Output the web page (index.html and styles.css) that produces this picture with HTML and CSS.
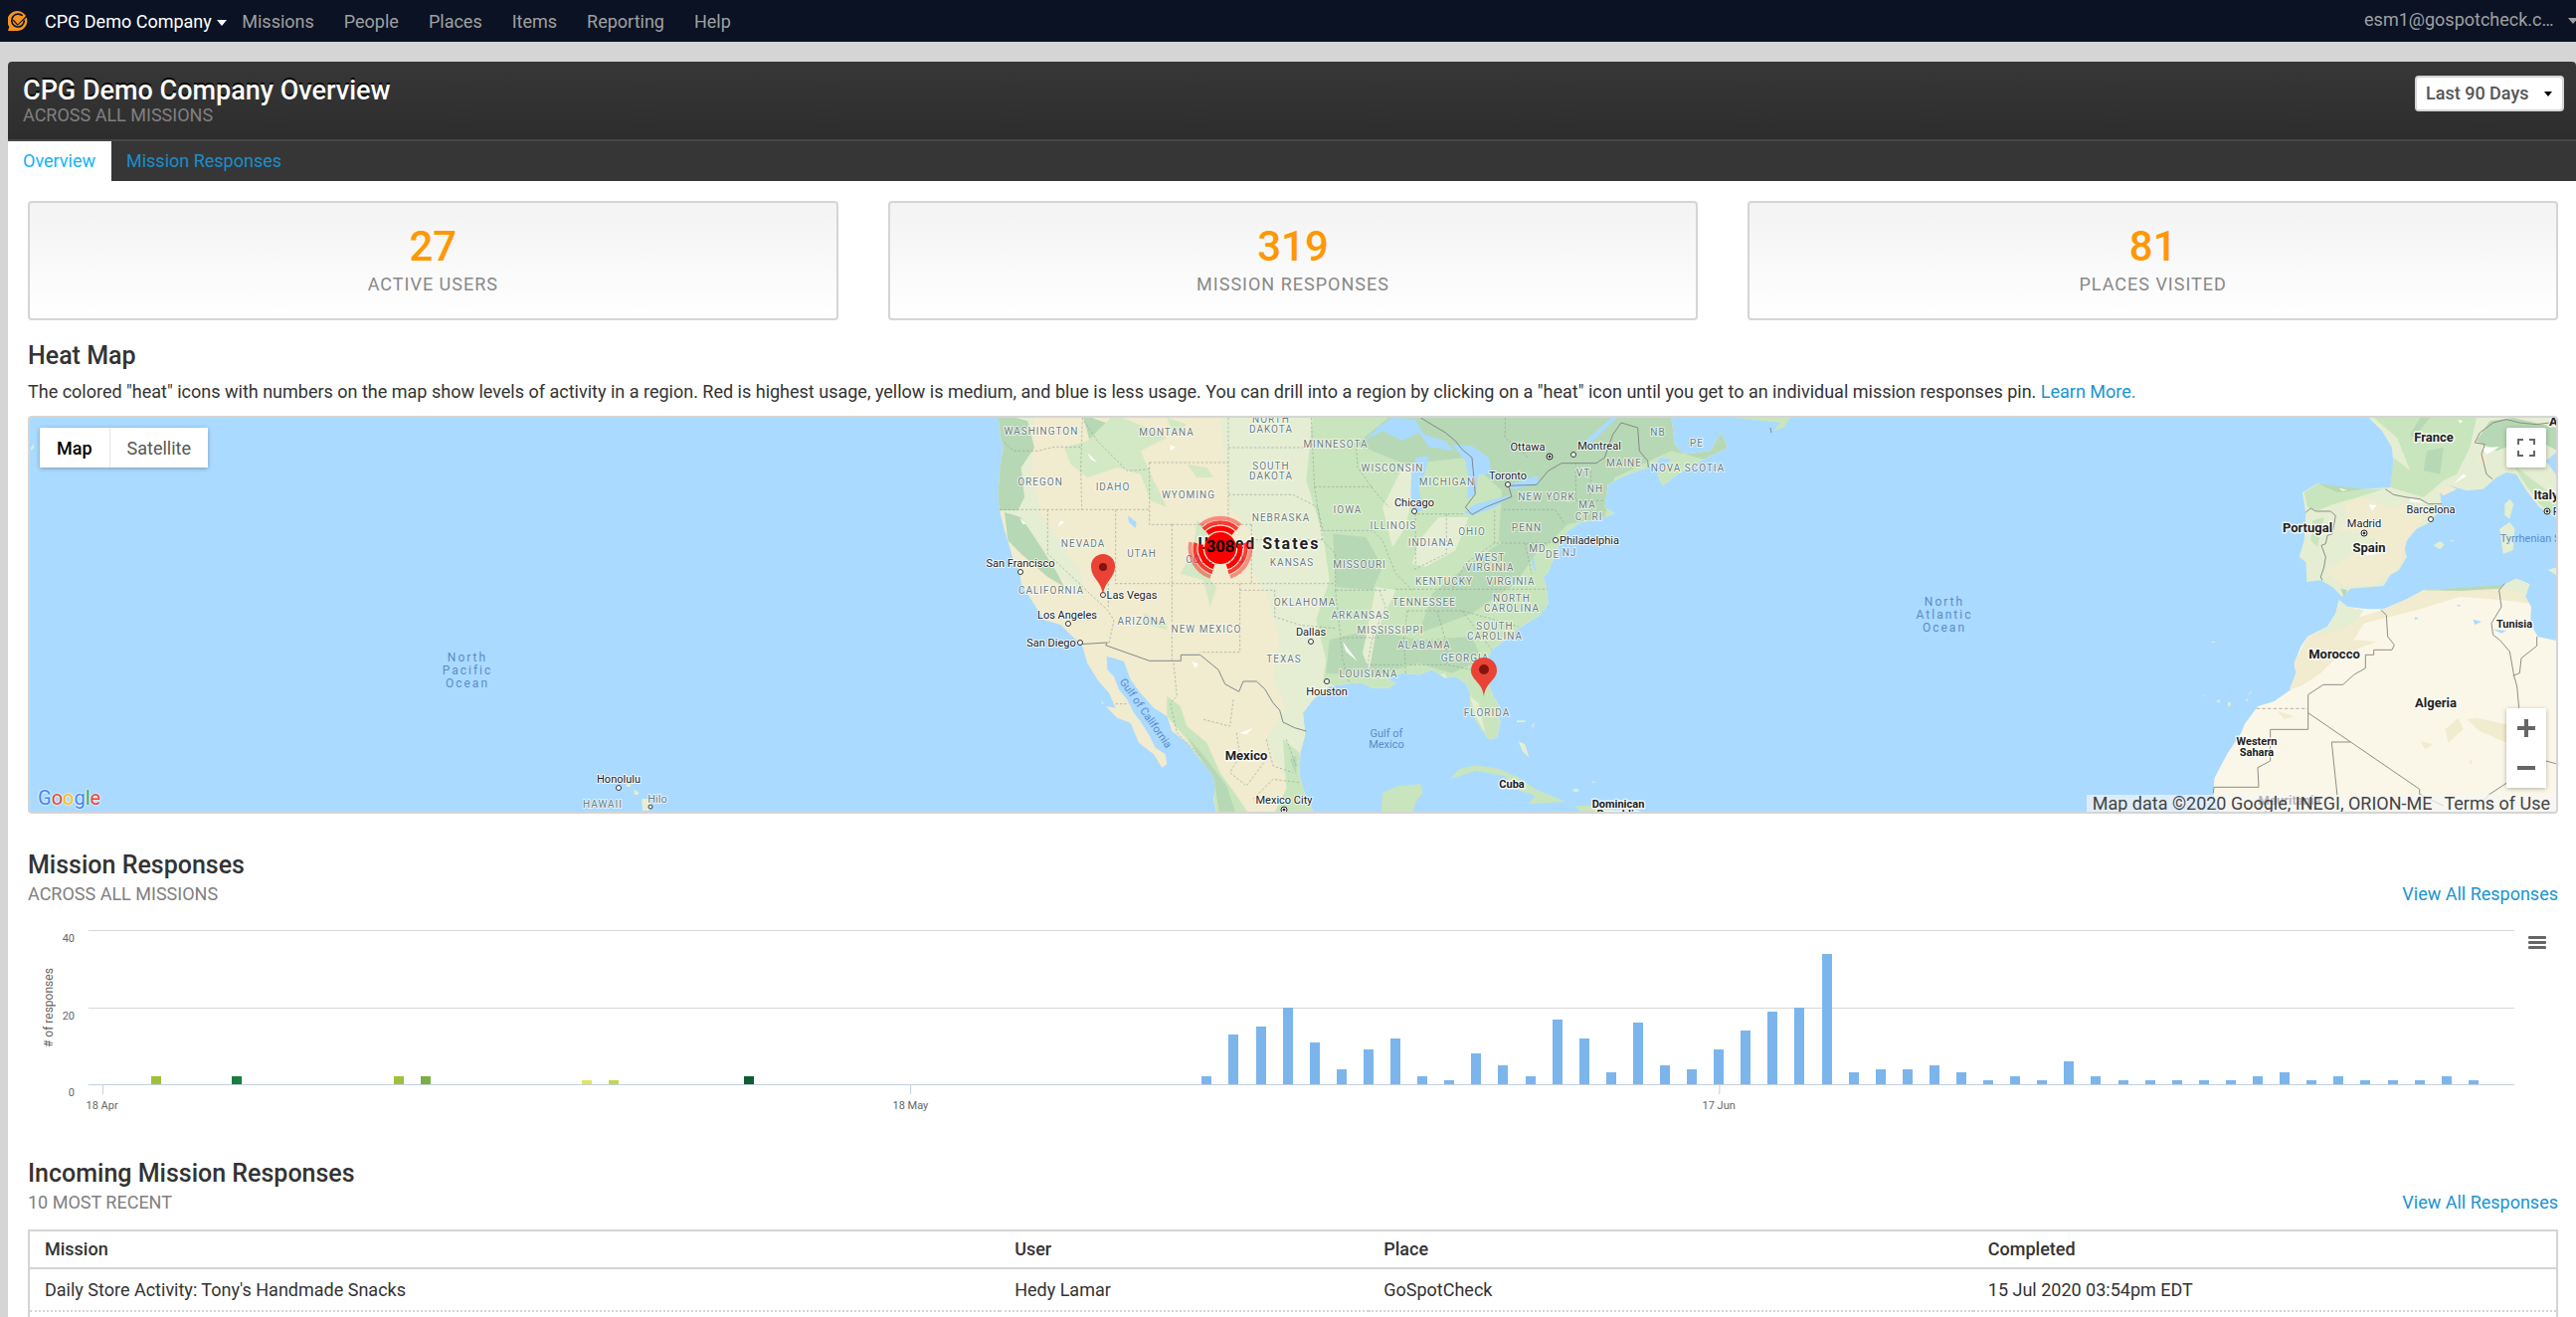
FILE: index.html
```html
<!DOCTYPE html>
<html lang="en">
<head>
  <meta charset="UTF-8">
  <meta name="viewport" content="width=device-width, initial-scale=1.0">
  <title>CPG Demo Company Overview</title>
  <link rel="stylesheet" href="styles.css">
</head>
<body>
  <nav class="navbar">
    <a href="#" class="logo" aria-label="Home">
      <svg width="20" height="20" viewBox="0 0 60 60">
        <path fill="#f7941e" d="M0 60L4 48A30 30 0 1 1 30 60Z"/>
        <path fill="none" stroke="#0a1224" stroke-width="5" d="M45 15C34 5 18 9 13 21C8 34 15 46 28 48C40 49 49 41 49 28"/>
        <path fill="none" stroke="#0a1224" stroke-width="5" d="M16 27L29 41L60 12"/>
        <path fill="none" stroke="#f7941e" stroke-width="8" d="M20 23L30 34L50 14"/>
      </svg>
    </a>
    <a href="#" class="company">CPG Demo Company <span class="caret"></span></a>
    <ul class="menu">
      <li><a href="#">Missions</a></li>
      <li><a href="#">People</a></li>
      <li><a href="#">Places</a></li>
      <li><a href="#">Items</a></li>
      <li><a href="#">Reporting</a></li>
      <li><a href="#">Help</a></li>
    </ul>
    <a href="#" class="account">esm1@gospotcheck.c… <span class="caret"></span></a>
  </nav>

  <main class="panel">
    <header class="panel-header">
      <div>
        <h1>CPG Demo Company Overview</h1>
        <p class="subtitle">ACROSS ALL MISSIONS</p>
      </div>
      <div class="range">
        <select aria-label="Date range">
          <option>Last 90 Days</option>
        </select>
      </div>
    </header>
    <div class="tabs">
      <a href="#" class="tab active">Overview</a>
      <a href="#" class="tab">Mission Responses</a>
    </div>

    <div class="content">
      <div class="stats">
        <div class="stat"><strong>27</strong><span>ACTIVE USERS</span></div>
        <div class="stat"><strong>319</strong><span>MISSION RESPONSES</span></div>
        <div class="stat"><strong>81</strong><span>PLACES VISITED</span></div>
      </div>

      <section class="heat">
        <h2>Heat Map</h2>
        <p class="intro">The colored "heat" icons with numbers on the map show levels of activity in a region. Red is highest usage, yellow is medium, and blue is less usage. You can drill into a region by clicking on a "heat" icon until you get to an individual mission responses pin. <a href="#">Learn More.</a></p>
        <div class="map">
          <svg class="map-canvas" viewBox="30 420 2540 396" preserveAspectRatio="xMidYMid slice">
            <defs>
              <clipPath id="america">
                <path d="M130 20L140 100L148 110L135 190L130 265L135 310L150 370L165 420L180 470L195 490L200 530L225 570L250 610L270 640L320 655L355 690L385 720L400 770L430 820L465 860L485 905L455 900L490 935L530 950L555 1010L600 1045L625 1085L640 1075L635 1045L605 1025L585 985L560 945L540 920L520 880L495 850L480 810L460 790L458 750L480 755L510 765L530 820L560 860L600 905L640 930L655 975L700 1010L740 1060L780 1110L785 1150L780 1180L790 1230H1090L1060 1180L1040 1110L1042 1040L1057 985L1050 920L1085 875L1130 840L1200 830L1225 828L1260 845L1310 845L1330 830L1300 815L1350 800L1400 805L1440 790L1480 815L1510 810L1540 830L1555 860L1555 900L1570 940L1610 1000L1635 995L1645 950L1642 900L1620 860L1605 820L1600 770L1620 730L1660 700L1700 665L1765 625L1790 590L1785 545L1775 510L1790 495L1812 440L1820 420L1850 370L1890 345L1945 335L1990 318L1960 300L1965 265L1970 230L2020 205L2060 190L2095 180L2130 150L2165 152L2120 200L2135 235L2180 200L2250 160L2330 120L2312 75L2280 130L2200 140L2170 110L2165 60L2160 20Z"/>
              </clipPath>
            </defs>

            <!-- North America -->
            <g transform="translate(960 410) scale(.33333)">
              <g clip-path="url(#america)">
                <rect x="90" y="0" width="2300" height="1260" fill="#f1ebcf"/>
                <path fill="#e5eed2" d="M800 20H2400V1240H1090L980 1090L940 1000L1000 900L960 820L980 700L940 560L890 480L900 380L830 300Z"/>
                <path fill="#c9e5bd" d="M1080 20H2400V1000H1500L1480 800L1280 860L1110 830L1120 760L1090 640L1130 520L1110 380L1060 220Z"/>
                <path fill="#b7d8b4" d="M1320 20H2400V190L2160 130L1990 210L1960 330L1850 350L1780 420L1700 450L1640 400L1650 250L1540 150L1360 170L1210 110ZM1140 380L1240 390L1290 480L1260 550L1150 540ZM1640 410L1760 430L1690 530L1560 620L1400 680L1440 560L1540 480ZM1130 700L1250 670L1400 700L1560 690L1590 760L1500 800L1400 770L1250 810L1120 800Z"/>
                <path fill="#e5eed2" d="M1350 180L1400 170L1360 360L1320 420L1290 300ZM1460 330L1550 330L1510 430L1420 480L1380 470L1400 400ZM1270 540L1330 550L1270 680L1250 790L1230 740Z"/>
                <path fill="#e5eed2" d="M130 20H240L230 200L260 320L380 500L390 580L330 520L260 480L190 430L150 340Z"/>
                <path fill="#b7d8b4" d="M130 20H150L220 40L240 120L200 180L210 270L190 310L120 310ZM385 20L470 50L490 90L530 130L520 180L470 150L410 110ZM150 315L200 330L260 420L310 500L330 540L280 510L200 440L160 400Z"/>
                <path fill="#d3e8c4" d="M480 20L580 60L640 90L560 130L600 220L640 300L590 280L560 200L490 180L400 210L350 170L330 120L400 100ZM700 170L760 180L780 210L730 210ZM730 340L790 380L770 520L790 540L770 600L750 520L680 500L720 430ZM570 620L640 650L640 670L570 650ZM640 30L700 50L660 80Z"/>
                <path fill="#c9e5bd" d="M640 870L680 900L700 960L760 1010L800 1100L850 1170L890 1230H790L770 1110L700 1000L640 930ZM990 1000L1040 1040L1050 1130L1090 1230H960L1000 1150Z"/>
                <path fill="#b7d8b4" d="M700 990L760 1060L820 1140L850 1230H800L780 1120ZM1010 1060L1030 1050L1030 1110Z"/>
                <path fill="#fff" d="M320 340L330 345L310 360ZM715 765L735 772L725 785ZM195 330L215 350L205 350ZM650 110L665 120L650 130ZM400 135L430 165L410 155ZM860 980L900 965L880 985ZM1170 705L1215 765L1180 735Z"/>
              </g>

              <!-- lakes and rivers -->
              <g fill="#aadaff">
                <path d="M1235 100L1280 55L1320 30L1390 35L1415 80L1480 100L1505 130L1430 118L1400 75L1350 100L1290 70ZM1392 150L1430 145L1420 190L1400 240L1410 310L1383 316L1375 260L1378 190ZM1500 110L1560 115L1610 150L1620 200L1580 200L1570 260L1545 275L1550 220L1540 160ZM1535 315L1570 290L1680 262L1630 300L1560 325ZM1660 236L1755 205L1765 228L1690 246ZM1985 25L2000 28L1930 95L1880 125L1890 110ZM522 325L548 345L545 362L525 345ZM1745 445L1755 500L1740 470Z"/>
              </g>

              <!-- islands and the Yucatan -->
              <path fill="#c9e5bd" d="M1495 1120L1520 1090L1570 1078L1640 1088L1700 1115L1750 1150L1800 1170L1842 1188L1730 1195L1750 1170L1690 1150L1660 1110L1570 1095ZM1290 1160L1340 1140L1405 1135L1412 1160L1390 1190L1380 1230H1285ZM1870 1200L1960 1200L2000 1230H1900ZM2350 30L2520 30L2500 60L2470 70L2490 45Z"/>
              <path fill="#e5eed2" d="M1700 1005L1720 1015L1732 1055L1712 1035ZM1695 943H1720V948H1695ZM1742 955L1748 950L1742 972ZM1865 1150H1882V1157H1865ZM1922 1124L1935 1130H1925ZM1555 870L1580 890L1600 980L1570 930ZM440 885L450 890L445 893Z"/>

              <!-- state lines -->
              <path fill="none" stroke="#8d9c97" stroke-opacity=".6" stroke-width="3" stroke-dasharray="7 6" d="M148 105L180 130L250 130L300 118L380 118M385 30L380 180L383 307M135 307H587M280 307V440L460 610L480 640L465 710M485 307V530M463 530V600M390 40L430 100L520 190L587 185M587 165H825M587 165V352H655M825 30V352M825 120H1075M825 262H1020L1095 300L1110 370M655 352H895M655 352V760M895 352V530M895 398H1110M485 530H895L1148 530M860 530V737H740M860 550H965V630L1040 655L1150 665M1075 30L1085 238L1110 400L1148 440V550M1085 238H1260M1150 550H1300M1110 370H1260L1290 400L1330 500L1380 550M1148 550L1160 660L1170 760L1190 830M1170 693H1280M1280 550L1300 600L1260 690L1245 775H1350M1383 320H1535M1390 320V470M1483 320V440L1380 490M1628 310V408H1780L1830 400M1655 307H1810L1840 350M1628 408L1540 470L1500 550M1330 547H1788M1365 612H1530L1630 640L1700 660M1365 612L1355 690L1360 800M1455 612L1480 700L1485 775M1372 775H1485L1560 790M1530 612L1620 730M1873 165V280M1920 190L1915 270M1870 280H1960M1720 408L1740 500M1210 110L1215 180L1265 250L1310 300M1660 30V90L1730 150M1000 1000L1030 1080M660 770L670 870L650 890L670 980L740 1050M750 940L830 960L840 880M850 980L860 1050L830 1100L880 1140L940 1060M940 1000L960 1080L1020 1100M900 1180L960 1120L1040 1130M485 893H525"/>
              <!-- borders -->
              <path fill="none" stroke="#7f8a8a" stroke-width="3" d="M378 713L460 708L455 716L587 763H682V745H740L795 790L815 833L857 856L870 825H910L935 848L960 890L980 912L990 948L1025 965L1060 975M1405 30L1480 75L1510 100L1530 125L1560 150L1570 260L1540 300L1560 322L1600 300L1680 268L1670 235L1755 232L1790 190L1830 167H1935L1960 150L1985 80L2010 45L2060 60L2065 130L2090 160L2092 180M2460 60L2463 75"/>
            </g>

            <!-- Hawaii -->
            <path fill="#e5eed2" d="M630 788H634V791H630ZM637 794L642 796V799H638ZM645 803L652 803L656 809L652 815H646ZM31 450L34 446V450L31 453Z"/>

            <!-- Europe and Africa -->
            <g transform="translate(2190 410) scale(.33333)">
              <path fill="#e5eed2" d="M565 20L615 70L645 120L650 180L640 240L560 245L490 240L420 228L375 255L385 320L380 400L365 450L385 465L388 525L430 520L465 540L495 570L520 545L620 537L640 505L665 490L690 450L680 415L710 370L760 345L795 300L790 255L820 235L870 250L920 245L960 210L990 195L1020 200L1050 250L1090 300L1145 335V210L1110 160L1145 130V20Z"/>
              <path fill="#c9e5bd" d="M590 30H900L880 120L840 200L800 220L740 270L640 240L650 150L700 190L660 90ZM380 255L420 230L560 245L620 245L540 270L470 290L420 310L390 300ZM1010 170L1060 210L1140 270V330L1090 290L1040 220ZM440 330L420 420L400 400L405 340Z"/>
              <path fill="#b7d8b4" d="M900 100L940 40L1010 30L1145 60V130L1070 90L960 130ZM420 228L560 245L480 255ZM750 130L800 120L790 200L740 190ZM700 80L730 30L760 30L710 90Z"/>
              <path fill="#f1ebcf" d="M500 290L560 270L640 300L700 290L740 340L690 400L670 480L600 530L500 540L440 490L530 440L640 430L570 380L480 370L510 320ZM780 245L820 235L840 245L800 265ZM900 150L935 130L925 180Z"/>
              <path fill="#fff" d="M575 292L598 294L585 310ZM860 200L870 205L830 230ZM700 270L745 288L700 283ZM485 242L510 248L495 250ZM545 420L600 440L570 445ZM845 35L858 40L850 47ZM915 120L970 118L930 140Z"/>
              <path fill="#fbf7e8" d="M485 580L510 600L570 607L620 607L690 577L740 550L850 545L980 535L1020 515L1060 532L1047 570L1065 600L1062 650L1085 690L1145 703V1230H130L105 1160L110 1115L150 1040L190 980L200 955L240 900L290 885L340 850L355 800L350 770L370 720L390 690L450 660L475 620Z"/>
              <path fill="#f1ebcf" d="M390 690L450 660L520 640L600 615L690 577L740 550L980 537L1020 515L1060 532L1047 570L1060 590L980 580L850 570L720 610L620 635L560 650L530 700L600 705L480 750L430 800L370 840L335 850L355 800L350 770ZM805 970L845 935L860 970L815 1010ZM870 940L900 935L990 955V1010L910 975ZM730 1005L770 1015L745 1030ZM880 1060L890 1070L880 1075ZM300 915L350 930L320 940Z"/>
              <path fill="#e5eed2" d="M485 580L510 600L560 610L540 640L500 665L430 685L400 690L450 660L475 620ZM980 535L1020 515L1060 532L1047 560L990 550ZM985 290L1000 275L1012 290L1000 335L985 325ZM970 365L1000 345L1015 365L1010 430L980 440ZM770 415L790 402L803 412L790 427ZM820 400L832 398L828 404ZM1115 488L1145 480V508ZM115 885L125 878L125 890ZM150 888H158V900H150ZM203 885L225 850L215 860L208 885ZM75 868L80 865V870ZM100 705H112V708H100Z"/>
              <path fill="#b7d8b4" d="M740 550L860 542L980 533L970 545L850 552ZM490 545L510 550L500 570Z"/>
              <path fill="#aadaff" d="M890 638L915 645L895 655ZM950 668L990 672L975 680ZM715 630L725 635L713 640ZM840 595L855 595L845 600Z"/>
              <path fill="none" stroke="#8d8d88" stroke-width="3" d="M385 315L400 303L415 312H460L475 325L465 380L450 385L445 410L432 415L445 450L440 480L430 510L435 520M625 245L650 262L690 270L730 275L755 290L795 290M895 105L910 75L950 45L990 35L1030 45L1080 50L1145 42M895 105L925 110L915 140L930 200L948 215M612 610L628 625L632 690L652 715L645 730H590V745H565V785L530 805L497 835H438L392 865V970H278V1065L240 1085L243 1144H108L106 1162M392 920L728 1150V1165L800 1200M463 1008H520M463 1008L480 1170M985 530L968 550L975 600L945 650L950 685L970 700L1000 735L1013 808L1022 840L1028 905M1082 690V718L1035 755L1030 800L1010 808M1110 1065L1145 1075M990 1132L940 1165L920 1185"/>
              <path fill="none" stroke="#8d8d88" stroke-width="2" stroke-dasharray="10 7" d="M236 907H392"/>
            </g>

            <!-- city dots -->
            <g fill="#fff" stroke="#333" stroke-width="1">
              <circle cx="1026" cy="575" r="2.5"/><circle cx="1109" cy="598" r="2.5"/><circle cx="1074" cy="627" r="2.5"/><circle cx="1086" cy="646" r="2.5"/>
              <circle cx="1318" cy="645" r="2.5"/><circle cx="1334" cy="685" r="2.5"/><circle cx="1422" cy="514" r="2.5"/><circle cx="1516" cy="487" r="2.5"/>
              <circle cx="1582" cy="457" r="2.5"/><circle cx="1564" cy="543" r="2.5"/><circle cx="2444" cy="522" r="2.5"/><circle cx="622" cy="792" r="2.5"/><circle cx="654" cy="811" r="2"/>
            </g>
            <g fill="#222" stroke="#222" stroke-width="1">
              <circle cx="1558" cy="459" r="3" fill="#fff"/><circle cx="1558" cy="459" r="1"/>
              <circle cx="2377" cy="536" r="3" fill="#fff"/><circle cx="2377" cy="536" r="1"/>
              <circle cx="2561" cy="514" r="3" fill="#fff"/><circle cx="2561" cy="514" r="1"/>
              <circle cx="1291" cy="814" r="3" fill="#fff"/><circle cx="1291" cy="814" r="1"/>
            </g>

            <g class="state">
              <text x="1047" y="437">WASHINGTON</text><text x="1173" y="438">MONTANA</text>
              <text x="1278" y="425">NORTH</text><text x="1278" y="435">DAKOTA</text>
              <text x="1278" y="472">SOUTH</text><text x="1278" y="482">DAKOTA</text>
              <text x="1343" y="450">MINNESOTA</text><text x="1046" y="488">OREGON</text><text x="1119" y="493">IDAHO</text>
              <text x="1195" y="501">WYOMING</text><text x="1288" y="524">NEBRASKA</text><text x="1355" y="516">IOWA</text>
              <text x="1089" y="550">NEVADA</text><text x="1148" y="560">UTAH</text><text x="1222" y="566">COLORADO</text>
              <text x="1299" y="569">KANSAS</text><text x="1367" y="571">MISSOURI</text><text x="1057" y="597">CALIFORNIA</text>
              <text x="1148" y="628">ARIZONA</text><text x="1213" y="636">NEW MEXICO</text><text x="1312" y="609">OKLAHOMA</text>
              <text x="1368" y="622">ARKANSAS</text><text x="1291" y="666">TEXAS</text><text x="1376" y="681">LOUISIANA</text>
              <text x="1400" y="474">WISCONSIN</text><text x="1455" y="488">MICHIGAN</text><text x="1401" y="532">ILLINOIS</text>
              <text x="1439" y="549">INDIANA</text><text x="1480" y="538">OHIO</text><text x="1535" y="534">PENN</text>
              <text x="1498" y="564">WEST</text><text x="1498" y="574">VIRGINIA</text><text x="1452" y="588">KENTUCKY</text>
              <text x="1519" y="588">VIRGINIA</text><text x="1432" y="609">TENNESSEE</text><text x="1520" y="605">NORTH</text>
              <text x="1520" y="615">CAROLINA</text><text x="1503" y="633">SOUTH</text><text x="1503" y="643">CAROLINA</text>
              <text x="1398" y="637">MISSISSIPPI</text><text x="1432" y="652">ALABAMA</text><text x="1473" y="665">GEORGIA</text>
              <text x="1495" y="720">FLORIDA</text><text x="1555" y="503">NEW YORK</text><text x="1592" y="479">VT</text>
              <text x="1604" y="495">NH</text><text x="1596" y="511">MA</text><text x="1591" y="523">CT</text><text x="1606" y="523">RI</text>
              <text x="1546" y="555">MD</text><text x="1561" y="561">DE</text><text x="1578" y="559">NJ</text>
              <text x="1633" y="469">MAINE</text><text x="1667" y="438">NB</text><text x="1706" y="449">PE</text>
              <text x="1697" y="474">NOVA SCOTIA</text><text x="606" y="812">HAWAII</text><text x="661" y="807" class="hilo">Hilo</text>
            </g>
            <g class="city">
              <text x="1026" y="570">San Francisco</text><text x="1138" y="602">Las Vegas</text><text x="1073" y="622">Los Angeles</text>
              <text x="1057" y="650">San Diego</text><text x="1318" y="639">Dallas</text><text x="1334" y="699">Houston</text>
              <text x="1422" y="509">Chicago</text><text x="1536" y="453">Ottawa</text><text x="1608" y="452">Montreal</text>
              <text x="1516" y="482">Toronto</text><text x="1598" y="547">Philadelphia</text><text x="1291" y="808">Mexico City</text>
              <text x="2377" y="530">Madrid</text><text x="2444" y="516">Barcelona</text><text x="622" y="787">Honolulu</text>
              <text x="2581" y="518">Rome</text>
            </g>
            <g class="country small">
              <text x="1520" y="792">Cuba</text><text x="1627" y="812">Dominican</text><text x="1627" y="822">Republic</text>
              <text x="2528" y="631">Tunisia</text><text x="2269" y="749">Western</text><text x="2269" y="760">Sahara</text>
            </g>
            <g class="country">
              <text x="1253" y="764">Mexico</text><text x="2447" y="444">France</text><text x="2320" y="535">Portugal</text>
              <text x="2382" y="555">Spain</text><text x="2347" y="662">Morocco</text><text x="2449" y="711">Algeria</text>
              <text x="2560" y="502">Italy</text><text x="2584" y="428">Austria</text><text x="2302" y="809">Mauritania</text>
            </g>
            <text class="nation" x="1266" y="552">United States</text>
            <g class="sea">
              <text x="470" y="665">North</text><text x="470" y="678">Pacific</text><text x="470" y="691">Ocean</text>
              <text x="1955" y="609">North</text><text x="1955" y="622">Atlantic</text><text x="1955" y="635">Ocean</text>
            </g>
            <g class="gulf">
              <text x="1394" y="741">Gulf of</text><text x="1394" y="752">Mexico</text><text x="2550" y="545">Tyrrhenian Sea</text>
              <text transform="translate(1149 719) rotate(55)">Gulf of California</text>
            </g>

            <!-- activity cluster -->
            <g transform="translate(1227 551)" fill="none" stroke="#f00">
              <circle r="16" fill="#f00" stroke="none"/>
              <g stroke-width="5">
                <path id="arc1" d="M-13 -15A20 20 0 0 1 13 -15"/>
                <use href="#arc1" transform="rotate(120)"/><use href="#arc1" transform="rotate(240)"/>
              </g>
              <g stroke-width="4" stroke-opacity=".75">
                <path id="arc2" d="M-17 -19A25 25 0 0 1 17 -19"/>
                <use href="#arc2" transform="rotate(120)"/><use href="#arc2" transform="rotate(240)"/>
              </g>
              <g stroke-width="4" stroke-opacity=".4">
                <path id="arc3" d="M-20 -23A31 31 0 0 1 20 -23"/>
                <use href="#arc3" transform="rotate(120)"/><use href="#arc3" transform="rotate(240)"/>
              </g>
            </g>
            <text class="count" x="1227" y="555">308</text>

            <!-- pins -->
            <g fill="#ea4335">
              <path d="M1109 599C1108 584 1097 582 1097 569A12 12 0 0 1 1121 569C1121 582 1110 584 1109 599Z"/>
              <path d="M1492 701C1491 686 1479 684 1479 674A13 13 0 0 1 1505 674C1505 684 1493 686 1492 701Z"/>
            </g>
            <circle cx="1109" cy="570" r="4" fill="#811411"/>
            <circle cx="1492" cy="673" r="5" fill="#811411"/>
          </svg>

          <div class="map-type">
            <button class="selected">Map</button>
            <button>Satellite</button>
          </div>
          <button class="fullscreen" aria-label="Toggle fullscreen">
            <svg width="18" height="18" viewBox="0 0 18 18"><path fill="#666" d="M0 0v6h2V2h4V0zM16 0h-4v2h4v4h2V0zM16 16h-4v2h6v-6h-2zM2 12H0v6h6v-2H2z"/></svg>
          </button>
          <div class="zoom">
            <button aria-label="Zoom in"><svg width="18" height="18" viewBox="0 0 18 18"><path fill="#666" d="M18 7h-7V0H7v7H0v4h7v7h4v-7h7z"/></svg></button>
            <button aria-label="Zoom out"><svg width="18" height="18" viewBox="0 0 18 18"><path fill="#666" d="M0 7h18v4H0z"/></svg></button>
          </div>
          <div class="google"><span class="b">G</span><span class="r">o</span><span class="y">o</span><span class="b">g</span><span class="g">l</span><span class="r">e</span></div>
          <div class="attribution"><span>Map data ©2020 Google, INEGI, ORION-ME</span><a href="#">Terms of Use</a></div>
        </div>
      </section>

      <section class="responses">
        <h2>Mission Responses</h2>
        <div class="section-sub">
          <p class="subtitle">ACROSS ALL MISSIONS</p>
          <a href="#">View All Responses</a>
        </div>
        <div class="chart">
          <div class="axis-title"># of responses</div>
          <div class="y-axis"><span>40</span><span>20</span><span>0</span></div>
          <div class="plot" id="plot"></div>
          <button class="chart-menu" aria-label="Chart menu"><i></i><i></i><i></i></button>
        </div>
      </section>

      <section class="incoming">
        <h2>Incoming Mission Responses</h2>
        <div class="section-sub">
          <p class="subtitle">10 MOST RECENT</p>
          <a href="#">View All Responses</a>
        </div>
        <table>
          <thead>
            <tr><th class="col-mission">Mission</th><th class="col-user">User</th><th class="col-place">Place</th><th>Completed</th></tr>
          </thead>
          <tbody>
            <tr><td>Daily Store Activity: Tony's Handmade Snacks</td><td>Hedy Lamar</td><td>GoSpotCheck</td><td>15 Jul 2020 03:54pm EDT</td></tr>
            <tr><td></td><td></td><td></td><td></td></tr>
          </tbody>
        </table>
      </section>
    </div>
  </main>

  <script>
    // one value per day, starting on 18 Apr
    const values = [
      0, 0, 2, 0, 0, 2, 0, 0, 0, 0, 0, 2, 2, 0, 0, 0, 0, 0, 1, 1,
      0, 0, 0, 0, 2, 0, 0, 0, 0, 0, 0, 0, 0, 0, 0, 0, 0, 0, 0, 0,
      0, 2, 13, 15, 20, 11, 4, 9, 12, 2, 1, 8, 5, 2, 17, 12, 3, 16, 5, 4,
      9, 14, 19, 20, 34, 3, 4, 4, 5, 3, 1, 2, 1, 6, 2, 1, 1, 1, 1, 1,
      2, 3, 1, 2, 1, 1, 1, 2, 1, 0
    ];
    const colors = { 2: '#a0c03c', 5: '#1b7d3e', 11: '#a0c03c', 12: '#7dae43', 18: '#e2e659', 19: '#c5d941', 24: '#115c33' };
    const ticks = { 0: '18 Apr', 30: '18 May', 60: '17 Jun' };

    const plot = document.getElementById('plot');
    values.forEach(function (value, day) {
      const col = document.createElement('div');
      col.className = 'day';
      if (value) {
        const bar = document.createElement('div');
        bar.className = 'bar';
        bar.style.height = (value / 40 * 100) + '%';
        if (colors[day]) bar.style.backgroundColor = colors[day];
        col.appendChild(bar);
      }
      if (ticks[day]) {
        const tick = document.createElement('span');
        tick.className = 'tick';
        tick.textContent = ticks[day];
        col.appendChild(tick);
      }
      plot.appendChild(col);
    });
  </script>
</body>
</html>
```
FILE: styles.css
```css
* {
  box-sizing: border-box;
}

body {
  margin: 0;
  height: 100vh;
  overflow: hidden;
  background-color: #d5d5d5;
  font-family: Roboto, "Liberation Sans", sans-serif;
  font-size: 18px;
  line-height: 24px;
  color: #333;
}

a {
  color: #1a94d2;
  text-decoration: none;
}

h1, h2, p {
  margin: 0;
}

h1, h2 {
  font-size: 27px;
  line-height: 32px;
  font-weight: 500;
}

h2 {
  font-size: 25px;
}

button {
  border: none;
  padding: 0;
  background-color: #fff;
  font-family: inherit;
  cursor: pointer;
}

/* top bar */
.navbar {
  display: flex;
  align-items: center;
  height: 42px;
  padding-left: 8px;
  background-color: #0a1224;
}

.navbar a {
  color: #a0a0a0;
}

.logo {
  display: flex;
  margin-right: 17px;
}

.navbar .company {
  padding-top: 2px;
  color: #fff;
}

.caret {
  display: inline-block;
  margin-left: 1px;
  border: 5px solid transparent;
  border-top: 6px solid currentColor;
  border-bottom: 0;
  vertical-align: middle;
}

.menu {
  display: flex;
  gap: 30px;
  margin: 0 0 0 15px;
  padding: 2px 0 0;
  list-style: none;
}

.account {
  margin-left: auto;
  margin-right: -2px;
  padding-bottom: 2px;
}

.account .caret {
  margin-left: 10px;
}

/* panel */
.panel {
  margin: 20px 0 0 8px;
  background-color: #fff;
  border-radius: 4px 4px 0 0;
  overflow: hidden;
}

.panel-header {
  display: flex;
  justify-content: space-between;
  height: 80px;
  padding: 13px 12px 0 15px;
  background-image: linear-gradient(#373737, #2d2d2d);
  border-bottom: 2px solid #464646;
}

.panel-header h1 {
  color: #fff;
  text-shadow: 0 -2px 0 #000;
}

.subtitle {
  color: #808080;
}

.panel-header .subtitle {
  line-height: 18px;
}

.range {
  position: relative;
  height: 36px;
  margin-top: 1px;
}

.range select {
  width: 150px;
  height: 36px;
  padding: 0 9px 1px;
  appearance: none;
  border: 2px solid #d5d5d5;
  border-radius: 4px;
  background-color: #fff;
  color: #555;
  font-family: inherit;
  font-size: 18px;
  font-weight: 500;
}

.range::after {
  content: "";
  position: absolute;
  right: 12px;
  top: 16px;
  border: 4px solid transparent;
  border-top: 5px solid #000;
  border-bottom: 0;
}

.tabs {
  display: flex;
  background-color: #363636;
}

.tab {
  padding: 8px 15px;
  color: #1a8fcb;
}

.tab.active {
  padding-right: 16px;
  background-color: #fff;
  color: #0fb4f5;
}

.content {
  padding: 20px 18px 0 20px;
}

/* stat boxes */
.stats {
  display: grid;
  grid-template-columns: repeat(3, 1fr);
  gap: 50px;
}

.stat {
  display: flex;
  flex-direction: column;
  align-items: center;
  height: 120px;
  padding-top: 22px;
  border: 2px solid #d5d5d5;
  border-radius: 4px;
  background-image: linear-gradient(#f3f3f3, #fff);
}

.stat strong {
  font-size: 42px;
  line-height: 44px;
  font-weight: 500;
  color: #ff9800;
}

.stat span {
  margin-top: 4px;
  letter-spacing: 1px;
  color: #888;
}

/* heat map */
.heat {
  padding-top: 20px;
}

.intro {
  margin: 8px 0 12px;
}

.map {
  position: relative;
  height: 400px;
  border: 2px solid #d5d5d5;
  border-radius: 4px;
  background-color: #aadaff;
  overflow: hidden;
}

.map-canvas {
  display: block;
  width: 100%;
  height: 100%;
}

.map-canvas text {
  text-anchor: middle;
  paint-order: stroke;
  stroke-linejoin: round;
}

.state {
  font-size: 10px;
  letter-spacing: 1px;
  fill: #6c7e80;
  stroke: rgba(255, 255, 255, 0.7);
  stroke-width: 2px;
}

.state .hilo {
  font-size: 11px;
  letter-spacing: 0;
}

.city {
  font-size: 11px;
  fill: #222;
  stroke: rgba(255, 255, 255, 0.8);
  stroke-width: 2px;
}

.country {
  font-size: 13px;
  font-weight: 700;
  fill: #222;
  stroke: rgba(255, 255, 255, 0.8);
  stroke-width: 3px;
}

.country.small {
  font-size: 11px;
}

.nation {
  font-size: 16px;
  font-weight: 700;
  letter-spacing: 2px;
  fill: #222;
  stroke: rgba(255, 255, 255, 0.8);
  stroke-width: 3px;
}

.sea {
  font-size: 12px;
  letter-spacing: 2px;
  fill: #5a8bc9;
}

.gulf {
  font-size: 11px;
  fill: #5a8bc9;
}

.count {
  font-family: "Liberation Sans", Arial, sans-serif;
  font-size: 17px;
  font-weight: 700;
}

.map-type {
  position: absolute;
  left: 10px;
  top: 10px;
  display: flex;
  border-radius: 2px;
  box-shadow: 0 1px 4px rgba(0, 0, 0, 0.3);
}

.map-type button {
  height: 40px;
  padding: 0 17px;
  font-size: 18px;
  color: #565656;
}

.map-type .selected {
  border-right: 1px solid #e6e6e6;
  color: #000;
  font-weight: 500;
}

.fullscreen, .zoom {
  position: absolute;
  right: 10px;
  width: 40px;
  border-radius: 2px;
  box-shadow: 0 1px 4px rgba(0, 0, 0, 0.3);
}

.fullscreen {
  top: 10px;
  height: 40px;
}

.fullscreen svg, .zoom svg {
  display: block;
  margin: 0 auto;
}

.zoom {
  bottom: 24px;
  background-color: #fff;
}

.zoom button {
  display: block;
  width: 40px;
  height: 40px;
}

.google {
  position: absolute;
  left: 8px;
  bottom: 2px;
  font-size: 20px;
  text-shadow: 0 0 2px #fff, 0 0 2px #fff;
}

.google .b { color: #4285f4; }
.google .r { color: #ea4335; }
.google .y { color: #fbbc04; }
.google .g { color: #34a853; }

.attribution {
  position: absolute;
  right: 0;
  bottom: 0;
  display: flex;
  gap: 12px;
  padding: 1px 6px 0;
  line-height: 16px;
  background-color: rgba(245, 245, 245, 0.7);
  color: #444;
}

.attribution a {
  color: #444;
}

/* responses chart */
.responses {
  padding-top: 36px;
}

.section-sub {
  display: flex;
  justify-content: space-between;
  line-height: 26px;
}

.chart {
  position: relative;
  display: flex;
  padding: 23px 44px 0 13px;
  font-size: 11px;
  line-height: 16px;
  color: #666;
}

.axis-title {
  height: 156px;
  font-size: 12px;
  writing-mode: vertical-rl;
  transform: rotate(180deg);
  text-align: center;
}

.y-axis {
  display: flex;
  flex-direction: column;
  justify-content: space-between;
  width: 18px;
  height: 172px;
  margin-right: 14px;
  padding-top: 1px;
  text-align: right;
}

.plot {
  flex: 1;
  display: flex;
  height: 156px;
  border-top: 1px solid #d8d8d8;
  border-bottom: 1px solid #c0d0e0;
  background: linear-gradient(#d8d8d8, #d8d8d8) 0 77px / 100% 1px no-repeat;
}

.day {
  position: relative;
  flex: 1;
  display: flex;
  align-items: flex-end;
  justify-content: center;
}

.bar {
  width: 10px;
  background-color: #7cb5ec;
}

.tick {
  position: absolute;
  top: 100%;
  left: 50%;
  padding-top: 14px;
  transform: translateX(-50%);
  white-space: nowrap;
}

.tick::before {
  content: "";
  position: absolute;
  top: 0;
  left: 50%;
  height: 10px;
  border-left: 1px solid #c0d0e0;
}

.chart-menu {
  position: absolute;
  top: 29px;
  right: 12px;
  display: flex;
  flex-direction: column;
  gap: 2px;
}

.chart-menu i {
  width: 18px;
  height: 3px;
  border-radius: 1px;
  background-color: #666;
}

/* incoming table */
.incoming {
  padding-top: 57px;
}

table {
  width: 100%;
  margin-top: 14px;
  border: 2px solid #d5d5d5;
  border-collapse: collapse;
  table-layout: fixed;
}

th, td {
  height: 43px;
  padding: 0 15px;
  text-align: left;
}

th {
  height: 38px;
  border-bottom: 2px solid #d5d5d5;
  font-weight: 500;
}

td {
  border-bottom: 2px dotted #d5d5d5;
}

.col-mission { width: 38.4%; }
.col-user { width: 14.6%; }
.col-place { width: 23.9%; }
```
